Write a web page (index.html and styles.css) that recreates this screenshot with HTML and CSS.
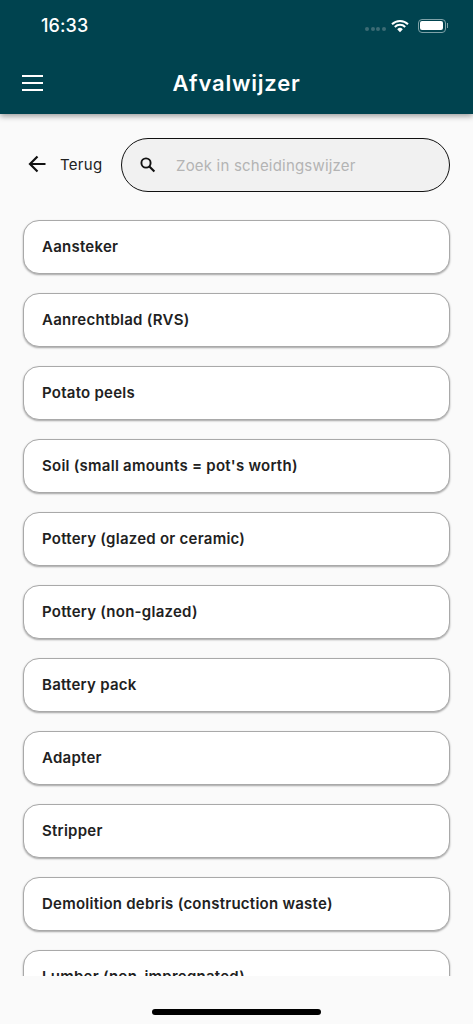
FILE: index.html
```html
<!DOCTYPE html>
<html lang="nl">
<head>
<meta charset="utf-8">
<title>Afvalwijzer</title>
<link rel="stylesheet" href="styles.css">
</head>
<body>
<div class="app">
  <header class="header">
    <div class="status">
      <span class="time">16:33</span>
      <div class="status-icons">
        <span class="dots"><i></i><i></i><i></i><i></i></span>
        <svg class="wifi" width="18" height="14" viewBox="0 0 18 14"><path d="M9 13.2 6.2 10.2a4 4 0 0 1 5.6 0z" fill="#fff"/><path d="M1 5.2a11.4 11.4 0 0 1 16 0M3.8 8a7.4 7.4 0 0 1 10.4 0" fill="none" stroke="#fff" stroke-width="2"/></svg>
        <span class="battery"><span class="battery-fill"></span></span>
        <span class="battery-cap"></span>
      </div>
    </div>
    <div class="appbar">
      <button class="menu" aria-label="Menu"><i></i><i></i><i></i></button>
      <h1 class="title">Afvalwijzer</h1>
    </div>
  </header>
  <main class="content">
    <div class="toolbar">
      <div class="back">
        <svg width="24" height="24" viewBox="0 0 24 24"><path d="M20.5 12H5.5M12.5 4.5 5 12l7.5 7.5" fill="none" stroke="#111" stroke-width="2.2"/></svg>
        <span>Terug</span>
      </div>
      <div class="search">
        <svg width="20" height="20" viewBox="0 0 20 20"><circle cx="8" cy="8" r="4.6" fill="none" stroke="#111" stroke-width="1.9"/><path d="m11.4 11.4 5 5" stroke="#111" stroke-width="2.1" fill="none"/></svg>
        <span class="placeholder">Zoek in scheidingswijzer</span>
      </div>
    </div>
    <ul class="list">
      <li class="card">Aansteker</li>
      <li class="card">Aanrechtblad (RVS)</li>
      <li class="card">Potato peels</li>
      <li class="card">Soil (small amounts = pot's worth)</li>
      <li class="card">Pottery (glazed or ceramic)</li>
      <li class="card">Pottery (non-glazed)</li>
      <li class="card">Battery pack</li>
      <li class="card">Adapter</li>
      <li class="card">Stripper</li>
      <li class="card">Demolition debris (construction waste)</li>
      <li class="card">Lumber (non-impregnated)</li>
    </ul>
  </main>
  <footer class="home"><span class="home-bar"></span></footer>
</div>
</body>
</html>
```

FILE: styles.css
```css
* { box-sizing: border-box; }
html, body { margin: 0; padding: 0; }
body { background: #fafafa; font-family: Inter, Roboto, sans-serif; color: #212121; }
.app { width: 473px; height: 1024px; display: flex; flex-direction: column; overflow: hidden; }

.header { height: 114px; flex: none; background: #00434f; color: #fff; box-shadow: 0 2px 6px rgba(0,0,0,.4); position: relative; z-index: 1; }
.status { height: 54px; display: flex; align-items: center; justify-content: space-between; padding: 0 25px 3px 41px; }
.time { font-size: 18px; font-weight: 500; letter-spacing: .1px; }
.status-icons { display: flex; align-items: center; }
.dots { display: flex; gap: 1.5px; margin: 6px 5px 0 0; }
.dots i { width: 4px; height: 4px; border-radius: 50%; background: #3b6b74; }
.wifi { margin-right: 9px; }
.battery { width: 28px; height: 14px; border: 1px solid #7fa2a8; border-radius: 4px; padding: 1.5px; display: block; }
.battery-fill { display: block; height: 100%; background: #fff; border-radius: 2px; }
.battery-cap { width: 1.5px; height: 5px; background: #7fa2a8; margin-left: 1px; }

.appbar { height: 60px; display: flex; align-items: center; justify-content: center; position: relative; padding-bottom: 3px; }
.menu { position: absolute; left: 22px; top: 21px; width: 21px; height: 16px; padding: 0; border: 0; background: none; display: flex; flex-direction: column; justify-content: space-between; }
.menu i { display: block; height: 2.2px; background: #fff; }
.title { margin: 0; font-size: 22px; font-weight: 600; letter-spacing: .8px; }

.content { flex: 1; min-height: 0; display: flex; flex-direction: column; overflow: hidden; padding: 24px 23px 0; }
.toolbar { display: flex; align-items: center; flex: none; height: 54px; margin-bottom: 28px; }
.back { width: 98px; display: flex; align-items: center; gap: 11px; font-size: 15px; letter-spacing: .3px; color: #212121; padding: 0 0 2px 2px; }
.search { flex: 1; height: 54px; border: 1.5px solid #111; border-radius: 27px; background: #f1f1f1; display: flex; align-items: center; padding-left: 16px; gap: 18px; }
.placeholder { font-size: 15px; letter-spacing: .2px; color: #b4b4b4; padding-top: 1px; }

.list { list-style: none; margin: 0; padding: 0; display: flex; flex-direction: column; gap: 19px; }
.card { flex: none; height: 54px; background: #fff; border: 1px solid #a9a9a9; border-radius: 16px; box-shadow: 0 1px 2px rgba(0,0,0,.35); display: flex; align-items: center; padding: 0 18px 2px; font-size: 15px; font-weight: 600; letter-spacing: .25px; color: #212121; }

.home { height: 48px; flex: none; background: #fafafa; display: flex; justify-content: center; padding-top: 33px; position: relative; }
.home-bar { width: 169px; height: 6px; border-radius: 3px; background: #000; }
```
